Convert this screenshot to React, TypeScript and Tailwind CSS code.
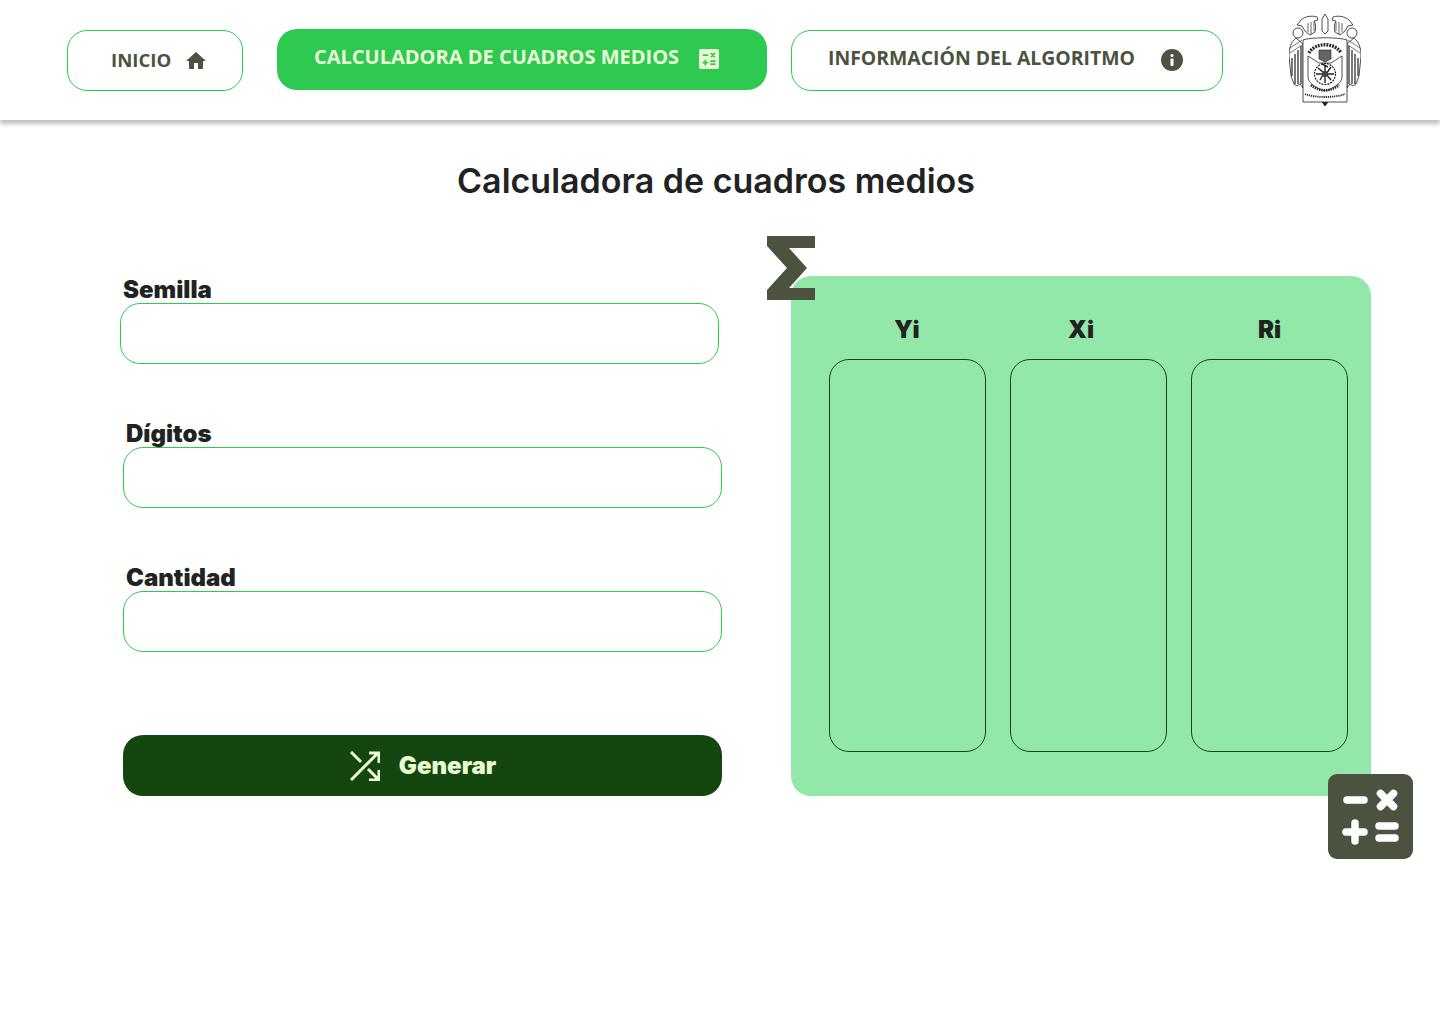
function CalcIcon({ className, fg }: { className: string; fg: string }) {
  return (
    <svg viewBox="0 0 85 85" className={className}>
      <rect width="85" height="85" rx="9" fill="currentColor" />
      <g stroke={fg} strokeWidth="7.5" strokeLinecap="round" fill="none">
        <path d="M19 26h17" />
        <path d="M52.500 19.500l13 13M65.500 19.500l-13 13" />
        <path d="M18 58h18M27 49v18" />
        <path d="M51 52h16M51 64h16" />
      </g>
    </svg>
  );
}

function Crest() {
  return (
    <svg viewBox="0 0 72 93" className="h-[93px] w-[72px]" fill="none" stroke="#222" strokeWidth="0.8">
      {/* eagle heads */}
      <path d="M12 6c3-3 10-5 16-3l1 3-4 1c2 3 2 7 1 11l-5 3-5-4-3-5-5-1z" />
      <path d="M60 6c-3-3-10-5-16-3l-1 3 4 1c-2 3-2 7-1 11l5 3 5-4 3-5 5-1z" />
      <path d="M33 17V5l3-5 3 5v12l-3 3z" />
      <path d="M19 9v9M22 8v12M25 8v9M47 8v9M50 8v12M53 9v9" strokeWidth="0.7" />
      <circle cx="9" cy="19" r="5" />
      <circle cx="63" cy="19" r="5" />
      {/* wings */}
      <path d="M7 24C2 28 0 34 0 42l2 20 3 8 3 2 3-2 3 4V30z" fill="#fff" />
      <path d="M65 24c5 4 7 10 7 18l-2 20-3 8-3 2-3-2-3 4V30z" fill="#fff" />
      <path d="M3 44v18M6 40v30M9 36v34M12 32v38M60 32v38M63 36v34M66 40v30M69 44v18" strokeWidth="1.2" />
      <path d="M1 34l12-8M1 39l12-8M71 34l-12-8M71 39l-12-8" strokeWidth="0.6" />
      {/* shield */}
      <path d="M14 26c8-3 36-3 44 0v62H14z" fill="#fff" />
      <path d="M33 88l3 4 3-4" fill="#222" />
      <path d="M20 39c6-11 26-11 32 0" strokeWidth="3.4" strokeDasharray="1.8 1.100" />
      <path d="M30 36h12v9l-6 3-6-3z" fill="#666" strokeWidth="0.6" />
      <path d="M19 42l11 7h12l11-7v21c0 6-8 11-17 14-9-3-17-8-17-14z" />
      <circle cx="36" cy="60" r="10.500" strokeWidth="1.200" strokeDasharray="2 1" />
      <path d="M29 54l6 5-4 7M42 53l-5 7 5 6M33 50l6 3M27 60h18M36 51v18" strokeWidth="1.400" />
      <circle cx="36" cy="60" r="3" fill="#444" stroke="none" />
      <path d="M22 71c8 7 20 7 28 0" strokeWidth="2.600" strokeDasharray="1.400 0.900" />
      <path d="M16 80c11 4 29 4 40 0" strokeWidth="1.800" strokeDasharray="1.200 0.900" />
    </svg>
  );
}

function Field({ label, className }: { label: string; className: string }) {
  return (
    <div className={className}>
      <label className="block h-[26px] pl-[3px] text-[24px] leading-[26px] font-black text-[#222222]">{label}</label>
      <input className="block h-[61px] w-[599px] rounded-[20px] border border-[#2ec951] bg-white outline-none" />
    </div>
  );
}

function Column({ title, titleClass }: { title: string; titleClass: string }) {
  return (
    <div className="flex w-[157px] flex-col">
      <div className={`h-[83px] pt-[38px] text-center text-[24px] leading-[32px] font-black text-[#222222] ${titleClass}`}>{title}</div>
      <div className="h-[393px] rounded-[20px] border border-[#14470f]" />
    </div>
  );
}

export default function App() {
  return (
    <div className="relative h-[1024px] w-[1440px] overflow-hidden bg-white font-['Inter',sans-serif]">
      <header className="flex h-[120px] items-center bg-white pl-[67px] shadow-[0_4px_4px_rgba(0,0,0,0.25)]">
        <a className="flex h-[61px] w-[176px] items-center rounded-[20px] border border-[#2ec951] pl-[43px] font-['Open_Sans',sans-serif] text-[18.6px] font-bold text-[#4b5340]">
          INICIO
          <svg viewBox="2 3 20 17" className="ml-[15px] h-[17px] w-[20px]" fill="#4b5340">
            <path d="M10 20v-6h4v6h5v-8h3L12 3 2 12h3v8z" />
          </svg>
        </a>
        <a className="-mt-[2px] ml-[34px] flex h-[61px] w-[490px] items-center rounded-[20px] bg-[#2ec951] pl-[37px] font-['Open_Sans',sans-serif] text-[20px] font-bold whitespace-nowrap text-[#e9fcd4]">
          <span className="-mt-[4px]">CALCULADORA DE CUADROS MEDIOS</span>
          <CalcIcon className="ml-[20px] h-[20px] w-[20px] text-[#e9fcd4]" fg="#2ec951" />
        </a>
        <a className="ml-[24px] flex h-[61px] w-[432px] items-center rounded-[20px] border border-[#2ec951] pl-[36px] font-['Open_Sans',sans-serif] text-[19.4px] font-bold whitespace-nowrap text-[#4b5340]">
          <span className="-mt-[4px]">INFORMACIÓN DEL ALGORITMO</span>
          <svg viewBox="0 0 22 22" className="ml-[26px] h-[22px] w-[22px]">
            <circle cx="11" cy="11" r="11" fill="#4b5340" />
            <circle cx="11" cy="6.500" r="1.600" fill="#fff" />
            <rect x="9.500" y="9.500" width="3" height="7.500" rx="0.800" fill="#fff" />
          </svg>
        </a>
        <div className="mt-[1px] ml-[66px]">
          <Crest />
        </div>
      </header>

      <h1 className="mt-[38px] w-[1432px] text-center text-[34px] leading-[46px] font-semibold text-[#222222]">
        Calculadora de cuadros medios
      </h1>

      <main className="mt-[72px] flex pl-[120px]">
        <div className="w-[671px] pt-[1px]">
          <Field label="Semilla" className="" />
          <Field label="Dígitos" className="mt-[57px] ml-[3px]" />
          <Field label="Cantidad" className="mt-[57px] ml-[3px]" />
          <button className="mt-[83px] ml-[3px] flex h-[61px] w-[599px] items-center justify-center gap-[19px] rounded-[20px] bg-[#14470f] pl-[1px] text-[24px] font-black text-[#e9fcd4]">
            <svg viewBox="0 0 30 30" className="h-[30px] w-[30px]" fill="none" stroke="currentColor" strokeWidth="3">
              <path d="M1 29L28 2M19 2h10v10" />
              <path d="M1 1l10 10M18 18l10 10M19 29h10V19" />
            </svg>
            Generar
          </button>
        </div>
        <section className="relative h-[520px] w-[580px] rounded-[20px] bg-[#92e8a8]">
          <div className="flex gap-[24px] pl-[38px]">
            <Column title="Yi" titleClass="pr-[1px]" />
            <Column title="Xi" titleClass="pr-[15px]" />
            <Column title="Ri" titleClass="" />
          </div>
          <svg viewBox="0 0 48 64" className="absolute -top-[40px] -left-[24px] h-[64px] w-[48px]">
            <path d="M0 0h48v12H22l18 20-18 20h26v12H0v-10l20-22L0 10z" fill="#4b5340" />
          </svg>
          <CalcIcon className="absolute top-[498px] left-[537px] h-[85px] w-[85px] text-[#4b5340]" fg="#fff" />
        </section>
      </main>
    </div>
  );
}
